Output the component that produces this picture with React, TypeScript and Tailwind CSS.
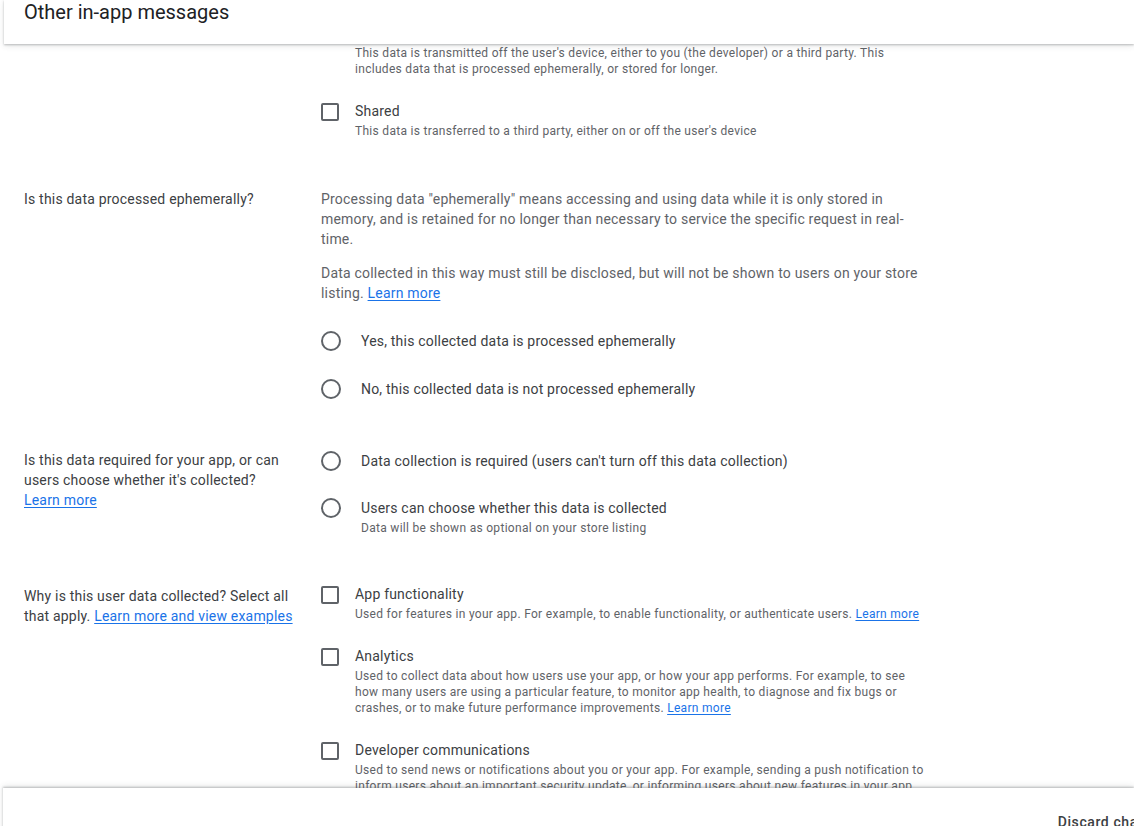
type Option = {
  title: string;
  desc?: React.ReactNode;
};

function LearnMore({ text = "Learn more" }: { text?: string }) {
  return <a className="text-[#1a73e8] underline underline-offset-2">{text}</a>;
}

function CheckItem({ title, desc }: Option) {
  return (
    <div className="flex items-start">
      <div className="mt-[2px] h-[18px] w-[18px] shrink-0 rounded-[2px] border-2 border-[#5f6368]" />
      <div className="ml-4">
        <div className="text-[14px] leading-5 tracking-[0.2px] text-[#3c4043]">{title}</div>
        {desc && <div className="mt-[2px] text-[12px] leading-4 tracking-[0.3px] text-[#5f6368]">{desc}</div>}
      </div>
    </div>
  );
}

function RadioItem({ title, desc }: Option) {
  return (
    <div className="flex items-start">
      <div className="h-5 w-5 shrink-0 rounded-full border-2 border-[#5f6368]" />
      <div className="ml-5">
        <div className="text-[14px] leading-5 tracking-[0.2px] text-[#3c4043]">{title}</div>
        {desc && <div className="mt-[2px] text-[12px] leading-4 tracking-[0.3px] text-[#5f6368]">{desc}</div>}
      </div>
    </div>
  );
}

function Section({
  label,
  className,
  children,
}: {
  label?: React.ReactNode;
  className?: string;
  children: React.ReactNode;
}) {
  return (
    <div className={"grid grid-cols-[273px_604px] gap-x-6 " + (className ?? "")}>
      <div className="text-[14px] leading-5 tracking-[0.2px] text-[#3c4043]">{label}</div>
      <div>{children}</div>
    </div>
  );
}

export default function App() {
  return (
    <div className="h-[826px] w-[1134px] overflow-hidden bg-white">
      <div
        className="flex h-[852px] w-full flex-col"
        style={{ fontFamily: "Roboto, 'Noto Sans', Arial, sans-serif" }}
      >
        <header className="relative z-10 ml-1 h-[44px] shrink-0 bg-white shadow-[0_1px_2px_rgba(60,64,67,0.3),0_2px_6px_rgba(60,64,67,0.12)]">
          <h1 className="-ml-1 pl-6 text-[20px] leading-6 text-[#202124]">Other in-app messages</h1>
        </header>

        <main className="min-h-0 flex-1 overflow-hidden">
          <div className="-mt-[21px] pl-6">
            <Section label="Is this data collected, shared, or both?">
              <div className="space-y-6">
                <CheckItem
                  title="Collected"
                  desc="This data is transmitted off the user's device, either to you (the developer) or a third party. This includes data that is processed ephemerally, or stored for longer."
                />
                <CheckItem
                  title="Shared"
                  desc="This data is transferred to a third party, either on or off the user's device"
                />
              </div>
            </Section>

            <Section className="mt-[50px]" label="Is this data processed ephemerally?">
              <p className="text-[14px] leading-5 tracking-[0.2px] text-[#5f6368]">
                Processing data "ephemerally" means accessing and using data while it is only stored in memory, and
                is retained for no longer than necessary to service the specific request in real-time.
              </p>
              <p className="mt-[14px] text-[14px] leading-5 tracking-[0.2px] text-[#5f6368]">
                Data collected in this way must still be disclosed, but will not be shown to users on your store
                listing. <LearnMore />
              </p>
              <div className="mt-7 space-y-7">
                <RadioItem title="Yes, this collected data is processed ephemerally" />
                <RadioItem title="No, this collected data is not processed ephemerally" />
              </div>
            </Section>

            <Section
              className="mt-[51px]"
              label={
                <>
                  Is this data required for your app, or can users choose whether it's collected?
                  <br />
                  <LearnMore />
                </>
              }
            >
              <div className="space-y-[27px] pt-px">
                <RadioItem title="Data collection is required (users can't turn off this data collection)" />
                <RadioItem
                  title="Users can choose whether this data is collected"
                  desc="Data will be shown as optional on your store listing"
                />
              </div>
            </Section>

            <Section
              className="mt-[48px]"
              label={
                <div className="mt-[2px]">
                  Why is this user data collected? Select all that apply.{" "}
                  <LearnMore text="Learn more and view examples" />
                </div>
              }
            >
              <div className="space-y-6">
                <CheckItem
                  title="App functionality"
                  desc={
                    <>
                      Used for features in your app. For example, to enable functionality, or authenticate users.{" "}
                      <LearnMore />
                    </>
                  }
                />
                <CheckItem
                  title="Analytics"
                  desc={
                    <>
                      Used to collect data about how users use your app, or how your app performs. For example, to
                      see how many users are using a particular feature, to monitor app health, to diagnose and fix
                      bugs or crashes, or to make future performance improvements. <LearnMore />
                    </>
                  }
                />
                <CheckItem
                  title="Developer communications"
                  desc="Used to send news or notifications about you or your app. For example, sending a push notification to inform users about an important security update, or informing users about new features in your app."
                />
                <CheckItem
                  title="Advertising or marketing"
                  desc="Used to display or target ads or marketing communications."
                />
              </div>
            </Section>
          </div>
        </main>

        <footer className="relative z-10 ml-[3px] h-[64px] shrink-0 bg-white shadow-[0_-1px_2px_rgba(60,64,67,0.3),0_-2px_6px_rgba(60,64,67,0.12)]">
          <div className="flex h-full w-[1290px] items-start justify-end gap-2 pr-6 pt-4">
            <button className="h-9 shrink-0 rounded px-3 text-[14px] font-medium tracking-[0.6px] text-[#3c4043]">
              Discard changes
            </button>
            <button className="h-9 shrink-0 rounded bg-[#1a73e8] px-6 text-[14px] font-medium text-white">Save</button>
          </div>
        </footer>
      </div>
    </div>
  );
}
